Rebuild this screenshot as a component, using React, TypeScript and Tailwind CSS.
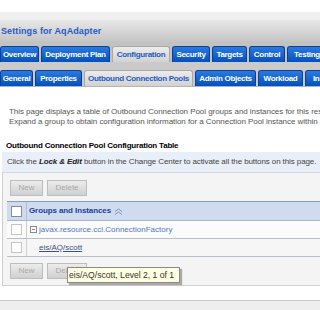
import React from 'react';

const topTabs = [
  { label: 'Overview', w: 'w-[39px]' },
  { label: 'Deployment Plan', w: 'w-[69px]' },
  { label: 'Configuration', w: 'w-[58px]', active: true },
  { label: 'Security', w: 'w-[38px]' },
  { label: 'Targets', w: 'w-[35px]' },
  { label: 'Control', w: 'w-[36px]' },
  { label: 'Testing', w: 'w-[40px]' },
];

const subTabs = [
  { label: 'General', w: 'w-[33px]' },
  { label: 'Properties', w: 'w-[47px]' },
  { label: 'Outbound Connection Pools', w: 'w-[109px]', active: true },
  { label: 'Admin Objects', w: 'w-[61px]' },
  { label: 'Workload', w: 'w-[45px]' },
  { label: 'Instances', w: 'w-[50px]' },
];

const Tab: React.FC<{ label: string; w: string; active?: boolean; h: string }> = ({ label, w, active, h }) => (
  <div
    className={`${w} ${h} shrink-0 rounded-t-[3px] flex items-center justify-center overflow-hidden whitespace-nowrap text-[8px] font-bold tracking-[-0.3px] ${
      active
        ? 'bg-gradient-to-b from-[#ececec] to-[#d2d2d2] text-[#1d5bc4] border border-b-0 border-[#a8a8a8]'
        : 'bg-gradient-to-b from-[#2a7ae0] to-[#0350bd] text-white border border-b-0 border-[#0a3f94]'
    }`}
  >
    {label}
  </div>
);

const Btn: React.FC<{ label: string; w: string }> = ({ label, w }) => (
  <div className={`${w} h-[16px] flex items-center justify-center text-[8px] text-[#a9a9a9] border border-[#bdbdbd] bg-gradient-to-b from-[#ececec] to-[#d0d0d0]`}>
    {label}
  </div>
);

const Check: React.FC<{ strong?: boolean }> = ({ strong }) => (
  <div className={`w-[11px] h-[11px] bg-white border ${strong ? 'border-[#8c8c8c]' : 'border-[#c4c4c4]'}`} />
);

export default function App() {
  return (
    <div className="relative w-[320px] h-[310px] overflow-hidden bg-white font-['Liberation_Sans',Arial,sans-serif]">
      <div className="h-[12px] bg-white" />
      <div className="h-[8px] bg-[#f0f0f0]" />
      <div className="h-[23px] bg-gradient-to-b from-[#e8e8e8] to-[#c2c2c2] flex items-center pl-[1px] text-[9px] font-bold text-[#1f5ac6] tracking-[0.1px]">
        Settings for AqAdapter
      </div>

      {/* tab rows */}
      <div className="h-[19px] bg-[#c2c2c2] flex items-end gap-[2px] pt-[3px]">
        {topTabs.map((t) => (
          <Tab key={t.label} {...t} h="h-[16px]" />
        ))}
      </div>
      <div className="h-[8px] bg-[#cacaca]" />
      <div className="h-[17px] bg-[#cacaca] flex items-end gap-[2px] border-b border-[#b4b4b4]">
        {subTabs.map((t) => (
          <Tab key={t.label} {...t} h="h-[16px]" />
        ))}
      </div>

      {/* intro */}
      <div className="pt-[20px] pl-[9px] text-[8px] leading-[10px] text-[#555] whitespace-nowrap tracking-[-0.05px]">
        <div>This page displays a table of Outbound Connection Pool groups and instances for this resource adapter.</div>
        <div>Expand a group to obtain configuration information for a Connection Pool instance within a group.</div>
      </div>

      <div className="mt-[14px] pl-[6px] text-[8px] leading-[10px] font-bold text-black whitespace-nowrap tracking-[-0.2px]">
        Outbound Connection Pool Configuration Table
      </div>

      <div className="mt-[1px] ml-[2px] h-[21px] bg-[#e9eff9] border-b border-[#d4d8de] flex items-center pl-[5px] text-[8px] text-[#444] whitespace-nowrap tracking-[-0.1px]">
        Click the&nbsp;<b className="italic text-[#222]">Lock &amp; Edit</b>&nbsp;button in the Change Center to activate all the buttons on this page.
      </div>

      {/* table panel */}
      <div className="ml-[2px] bg-[#f4f4f4] border-l border-b border-[#cfcfcf] pt-[7px] pb-[6px]">
        <div className="flex gap-[4px] pl-[7px]">
          <Btn label="New" w="w-[33px]" />
          <Btn label="Delete" w="w-[40px]" />
        </div>

        <div className="mt-[5px] ml-[4px]">
          <div className="h-[20px] bg-[#cfdcef] border-t border-b border-t-[#8e9cb3] border-b-[#a9b6c9] flex">
            <div className="w-[20px] flex items-center justify-center border-r border-[#b3c0d2]">
              <Check strong />
            </div>
            <div className="flex items-center pl-[2px] gap-[3px] text-[8px] font-bold text-[#1c3c96] tracking-[-0.1px]">
              Groups and Instances
              <svg width="9" height="7" viewBox="0 0 9 7" fill="none" stroke="#8a93a8" strokeWidth="1">
                <path d="M1 3.5 L4.5 1 L8 3.5" />
                <path d="M1 6.5 L4.5 4 L8 6.5" />
              </svg>
            </div>
          </div>

          <div className="h-[18px] bg-[#fbfbfb] border-b border-[#b8bec8] flex">
            <div className="w-[20px] flex items-center justify-center border-r border-[#d0d0d0]">
              <Check />
            </div>
            <div className="flex items-center pl-[3px] gap-[2px] text-[8px] text-[#5379c6] whitespace-nowrap">
              <svg width="7" height="7" viewBox="0 0 7 7" fill="none" stroke="#8a8a8a" strokeWidth="1">
                <rect x="0.5" y="0.5" width="6" height="6" />
                <path d="M2 3.5 H5" />
              </svg>
              javax.resource.cci.ConnectionFactory
            </div>
          </div>

          <div className="h-[18px] bg-[#f6f6f6] border-b border-[#b8bec8] flex">
            <div className="w-[20px] flex items-center justify-center border-r border-[#d0d0d0]">
              <Check />
            </div>
            <div className="flex items-center pl-[12px] text-[8px] text-[#3d4f7a] underline whitespace-nowrap">
              eis/AQ/scott
            </div>
          </div>
        </div>

        <div className="mt-[6px] flex gap-[4px] pl-[7px]">
          <Btn label="New" w="w-[33px]" />
          <Btn label="Delete" w="w-[40px]" />
        </div>
      </div>

      <div className="mt-[14px] border-t border-[#c8c8c8] h-[10px] bg-[#eeeeee]" />

      {/* tooltip */}
      <div className="absolute left-[67px] top-[267px] w-[113px] h-[16px] bg-[#ffffe1] border border-[#8a8a8a] shadow-[2px_2px_1px_rgba(0,0,0,0.3)] flex items-center pl-[1px] text-[8.6px] text-[#333] whitespace-nowrap">
        eis/AQ/scott, Level 2, 1 of 1
      </div>
    </div>
  );
}
